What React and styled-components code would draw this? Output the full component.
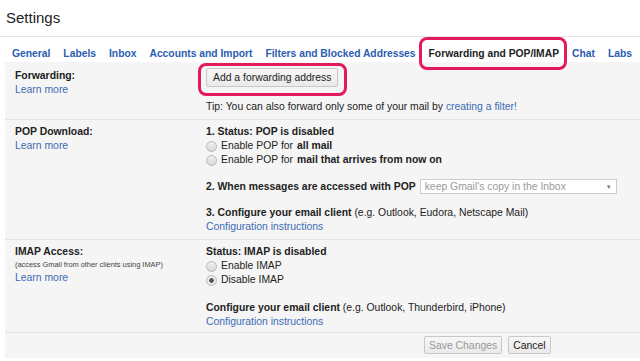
import styled, { createGlobalStyle } from "styled-components";

const GlobalStyle = createGlobalStyle`
  body {
    margin: 0;
    background: #fff;
    font-family: "Liberation Sans", Arial, sans-serif;
    color: #222;
  }
`;

const tabs = [
  "General",
  "Labels",
  "Inbox",
  "Accounts and Import",
  "Filters and Blocked Addresses",
  "Forwarding and POP/IMAP",
  "Chat",
  "Labs",
];

const App = () => {
  return (
    <Page>
      <GlobalStyle />
      <Header>Settings</Header>
      <TabBar>
        {tabs.map((t) => (
          <Tab key={t} active={t === "Forwarding and POP/IMAP"}>
            {t}
          </Tab>
        ))}
      </TabBar>
      <Panel>
        <Row top="7px" bottom="5px">
          <LabelCell>
            <Label>Forwarding:</Label>
            <Link>Learn more</Link>
          </LabelCell>
          <Content>
            <Highlight>
              <Button>Add a forwarding address</Button>
            </Highlight>
            <Tip>
              Tip: You can also forward only some of your mail by{" "}
              <Link>creating a filter!</Link>
            </Tip>
          </Content>
        </Row>
        <Row top="5px" bottom="5px">
          <LabelCell>
            <Label>POP Download:</Label>
            <Link>Learn more</Link>
          </LabelCell>
          <Content>
            <Strong>1. Status: POP is disabled</Strong>
            <Option>
              <Radio />
              Enable POP for <b>all mail</b>
            </Option>
            <Option>
              <Radio />
              Enable POP for <b>mail that arrives from now on</b>
            </Option>
            <Step>
              <Strong>2. When messages are accessed with POP</Strong>
              <Select>
                <span>keep Gmail's copy in the Inbox</span>
                <Caret>▼</Caret>
              </Select>
            </Step>
            <Block gap="12px">
              <div>
                <b>3. Configure your email client</b> (e.g. Outlook, Eudora,
                Netscape Mail)
              </div>
              <Link>Configuration instructions</Link>
            </Block>
          </Content>
        </Row>
        <Row top="5px" bottom="3px">
          <LabelCell>
            <Label>IMAP Access:</Label>
            <Small>(access Gmail from other clients using IMAP)</Small>
            <Link>Learn more</Link>
          </LabelCell>
          <Content>
            <Strong>Status: IMAP is disabled</Strong>
            <Option>
              <Radio />
              Enable IMAP
            </Option>
            <Option>
              <Radio checked />
              Disable IMAP
            </Option>
            <Block gap="14px">
              <div>
                <b>Configure your email client</b> (e.g. Outlook, Thunderbird,
                iPhone)
              </div>
              <Link>Configuration instructions</Link>
            </Block>
          </Content>
        </Row>
        <Footer>
          <Button small disabled>
            Save Changes
          </Button>
          <Button small>Cancel</Button>
        </Footer>
      </Panel>
    </Page>
  );
};

export default App;

const Page = styled.div`
  width: 640px;
  height: 361px;
  overflow: hidden;
`;

const Header = styled.div`
  height: 37px;
  box-sizing: border-box;
  padding: 9px 0 0 6px;
  font-size: 15px;
  border-bottom: 1px solid #e5e5e5;
`;

const TabBar = styled.div`
  display: flex;
  gap: 13px;
  padding: 11px 0 0 12px;
  height: 25px;
  box-sizing: border-box;
  white-space: nowrap;
`;

const Tab = styled.span`
  position: relative;
  font-size: 10.3px;
  line-height: 12px;
  font-weight: bold;
  color: ${(p) => (p.active ? "#222" : "#2a5db0")};
  ${(p) =>
    p.active &&
    `
    &::after {
      content: "";
      position: absolute;
      left: -10px;
      right: -8px;
      top: -11px;
      bottom: -8px;
      border: 3px solid #e21b5d;
      border-radius: 8px;
    }
  `}
`;

const Panel = styled.div`
  margin-left: 5px;
  background: #f5f5f5;
  font-size: 10.4px;
  padding-bottom: 4px;
`;

const Row = styled.div`
  display: grid;
  grid-template-columns: 191px 1fr;
  padding: ${(p) => p.top} 0 ${(p) => p.bottom} 10px;
  border-bottom: 1px solid #e6e6e6;
`;

const LabelCell = styled.div`
  display: flex;
  flex-direction: column;
  line-height: 14px;
`;

const Label = styled.span`
  font-weight: bold;
`;

const Small = styled.span`
  font-size: 7.4px;
  line-height: 12px;
  color: #444;
`;

const Link = styled.span`
  color: #3d6cb4;
`;

const Content = styled.div`
  display: flex;
  flex-direction: column;
  align-items: flex-start;
  line-height: 14px;
`;

const Highlight = styled.div`
  margin: -6px 0 0 -8px;
  padding: 2px 6px 6px 5px;
  border: 3px solid #e21b5d;
  border-radius: 8px;
`;

const Button = styled.button`
  font-family: "Liberation Sans", Arial, sans-serif;
  font-size: 10.4px;
  height: ${(p) => (p.small ? "18px" : "19px")};
  padding: ${(p) => (p.small ? "0 4px" : "0 6px")};
  color: ${(p) => (p.disabled ? "#999" : "#222")};
  background: linear-gradient(#f7f7f7, #eaeaea);
  border: 1px solid #c8c8c8;
  border-radius: 2px;
`;

const Tip = styled.div`
  margin-top: 4px;
`;

const Strong = styled.span`
  font-weight: bold;
`;

const Option = styled.label`
  display: flex;
  align-items: center;
  gap: 4px;
`;

const Radio = styled.span`
  width: 9px;
  height: 9px;
  border-radius: 50%;
  border: 1px solid #b8b8b8;
  background: ${(p) =>
    p.checked
      ? "radial-gradient(circle, #555 0 2px, #e9e9e9 2.5px)"
      : "linear-gradient(#f0f0f0, #d8d8d8)"};
`;

const Step = styled.div`
  display: flex;
  align-items: center;
  gap: 4px;
  margin-top: 12px;
`;

const Select = styled.div`
  width: 197px;
  height: 15px;
  box-sizing: border-box;
  background: #fff;
  border: 1px solid #ccc;
  color: #999;
  display: flex;
  align-items: center;
  justify-content: space-between;
  padding: 0 4px;
  line-height: 12px;
`;

const Caret = styled.span`
  font-size: 6px;
  color: #777;
`;

const Block = styled.div`
  margin-top: ${(p) => p.gap};
`;

const Footer = styled.div`
  display: flex;
  gap: 6px;
  padding: 3px 0 0 419px;
`;
